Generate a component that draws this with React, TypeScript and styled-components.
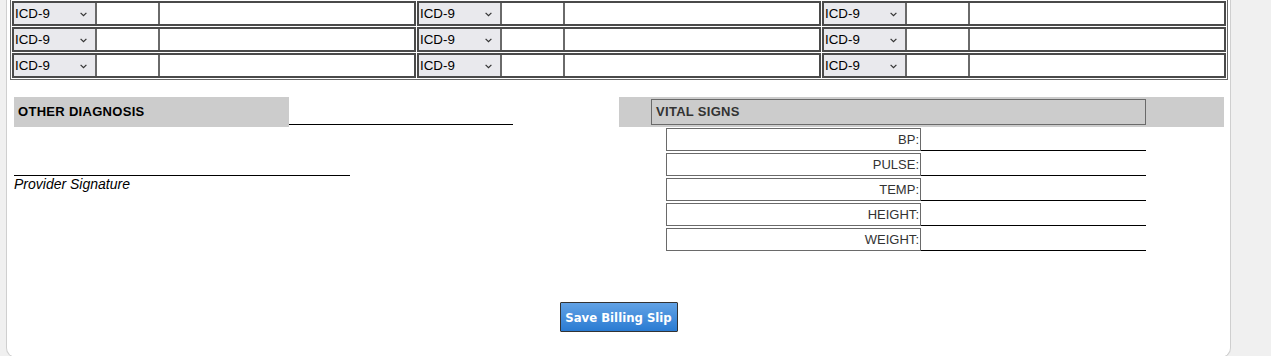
import React from "react";
import styled, { createGlobalStyle } from "styled-components";

const GlobalStyle = createGlobalStyle`
  html, body {
    margin: 0;
    padding: 0;
    overflow: hidden;
  }
  body {
    background: #f0f0f0;
    font-family: "Liberation Sans", Arial, sans-serif;
  }
`;

const Panel = styled.div`
  box-sizing: border-box;
  width: 1225px;
  height: 358px;
  margin-left: 6px;
  background: #fff;
  border: 1px solid #cfcfcf;
  border-top: none;
  border-radius: 0 0 10px 10px;
  display: flex;
  flex-direction: column;
`;

const CodeTable = styled.div`
  display: grid;
  grid-template-columns: repeat(3, 404px);
  column-gap: 1px;
  width: max-content;
  margin-left: 3px;
  padding: 1px;
  border: 1px solid #666;
  border-top: none;
`;

const CodeColumn = styled.div`
  display: flex;
  flex-direction: column;
  gap: 1px;
`;

const CodeRow = styled.div`
  box-sizing: border-box;
  display: flex;
  height: 25px;
  border: 2px solid #4a4a4a;
`;

const SelectWrap = styled.div`
  position: relative;
  width: 81px;
  flex: none;
`;

const CodeSelect = styled.select`
  appearance: none;
  width: 100%;
  height: 100%;
  margin: 0;
  padding: 0 0 0 1px;
  border: none;
  border-radius: 0;
  background: #e9e9ed;
  color: #000;
  font: 13.333px "Liberation Sans", Arial, sans-serif;
  outline: none;
`;

const Chevron = styled.svg`
  position: absolute;
  left: 66px;
  top: 9px;
  pointer-events: none;
`;

const Cell = styled.input<{ $w?: number }>`
  box-sizing: border-box;
  height: 100%;
  margin: 0;
  padding: 0 2px;
  border: none;
  border-left: 2px solid #6a6a6a;
  outline: none;
  font: 13.333px "Liberation Sans", Arial, sans-serif;
  ${(p) => (p.$w ? `width: ${p.$w}px; flex: none;` : `flex: 1; min-width: 0;`)}
`;

const Lower = styled.div`
  display: grid;
  grid-template-columns: 605px 605px;
  margin-top: 17px;
  padding-left: 7px;
`;

const LeftCol = styled.div`
  display: flex;
  flex-direction: column;
`;

const DiagRow = styled.div`
  display: flex;
  height: 30px;
`;

const HeaderCell = styled.div`
  display: flex;
  align-items: center;
  width: 275px;
  padding: 0 0 2px 4px;
  box-sizing: border-box;
  background: #ccc;
  color: #000;
  font-size: 13px;
  font-weight: bold;
  letter-spacing: 0.3px;
`;

const LineInput = styled.input<{ $w: number; $h: number }>`
  box-sizing: border-box;
  width: ${(p) => p.$w}px;
  height: ${(p) => p.$h}px;
  margin: 0;
  padding: 0 2px;
  border: none;
  border-bottom: 1px solid #000;
  outline: none;
  background: transparent;
  font: 13px "Liberation Sans", Arial, sans-serif;
`;

const SignatureLine = styled.div`
  width: 336px;
  margin-top: 48px;
  border-top: 1px solid #000;
`;

const SignatureLabel = styled.div`
  font-size: 14px;
  line-height: 16px;
  font-style: italic;
  color: #000;
`;

const VitalBand = styled.div`
  box-sizing: border-box;
  height: 30px;
  padding: 2px 0 0 32px;
  background: #ccc;
`;

const VitalTitle = styled.div`
  box-sizing: border-box;
  display: flex;
  align-items: center;
  width: 495px;
  height: 26px;
  padding: 0 0 2px 4px;
  border: 1px solid #6a6a6a;
  color: #333;
  font-size: 13px;
  font-weight: bold;
  letter-spacing: 0.3px;
`;

const VitalList = styled.div`
  display: flex;
  flex-direction: column;
  gap: 2px;
  margin: 1px 0 0 47px;
`;

const VitalRow = styled.div`
  display: flex;
  height: 23px;
`;

const VitalLabel = styled.label`
  box-sizing: border-box;
  display: flex;
  align-items: center;
  justify-content: flex-end;
  width: 255px;
  height: 23px;
  padding-right: 1px;
  border: 1px solid #6a6a6a;
  color: #333;
  font-size: 13px;
`;

const SaveButton = styled.button`
  box-sizing: border-box;
  align-self: center;
  width: 118px;
  height: 30px;
  margin-top: 51px;
  padding: 0;
  border: 1px solid #333;
  border-radius: 1px;
  background: linear-gradient(#62a2e5, #2a7bd2);
  color: #fff;
  font: bold 13px "DejaVu Sans Condensed", "DejaVu Sans", sans-serif;
  cursor: pointer;
`;

const vitals = ["BP", "PULSE", "TEMP", "HEIGHT", "WEIGHT"];

const CodeEntry = () => (
  <CodeRow>
    <SelectWrap>
      <CodeSelect defaultValue="ICD-9">
        <option>ICD-9</option>
        <option>ICD-10</option>
        <option>CPT</option>
      </CodeSelect>
      <Chevron width="7" height="5" viewBox="0 0 7 5">
        <path d="M0.6 0.8 L3.5 3.7 L6.4 0.8" fill="none" stroke="#333" strokeWidth="1.2" />
      </Chevron>
    </SelectWrap>
    <Cell $w={63} />
    <Cell />
  </CodeRow>
);

export default function App() {
  return (
    <>
      <GlobalStyle />
      <Panel>
        <CodeTable>
          {[0, 1, 2].map((c) => (
            <CodeColumn key={c}>
              {[0, 1, 2].map((r) => (
                <CodeEntry key={r} />
              ))}
            </CodeColumn>
          ))}
        </CodeTable>

        <Lower>
          <LeftCol>
            <DiagRow>
              <HeaderCell>OTHER DIAGNOSIS</HeaderCell>
              <LineInput $w={224} $h={28} />
            </DiagRow>
            <SignatureLine />
            <SignatureLabel>Provider Signature</SignatureLabel>
          </LeftCol>

          <div>
            <VitalBand>
              <VitalTitle>VITAL SIGNS</VitalTitle>
            </VitalBand>
            <VitalList>
              {vitals.map((v) => (
                <VitalRow key={v}>
                  <VitalLabel>{v}:</VitalLabel>
                  <LineInput $w={225} $h={23} />
                </VitalRow>
              ))}
            </VitalList>
          </div>
        </Lower>

        <SaveButton>Save Billing Slip</SaveButton>
      </Panel>
    </>
  );
}
